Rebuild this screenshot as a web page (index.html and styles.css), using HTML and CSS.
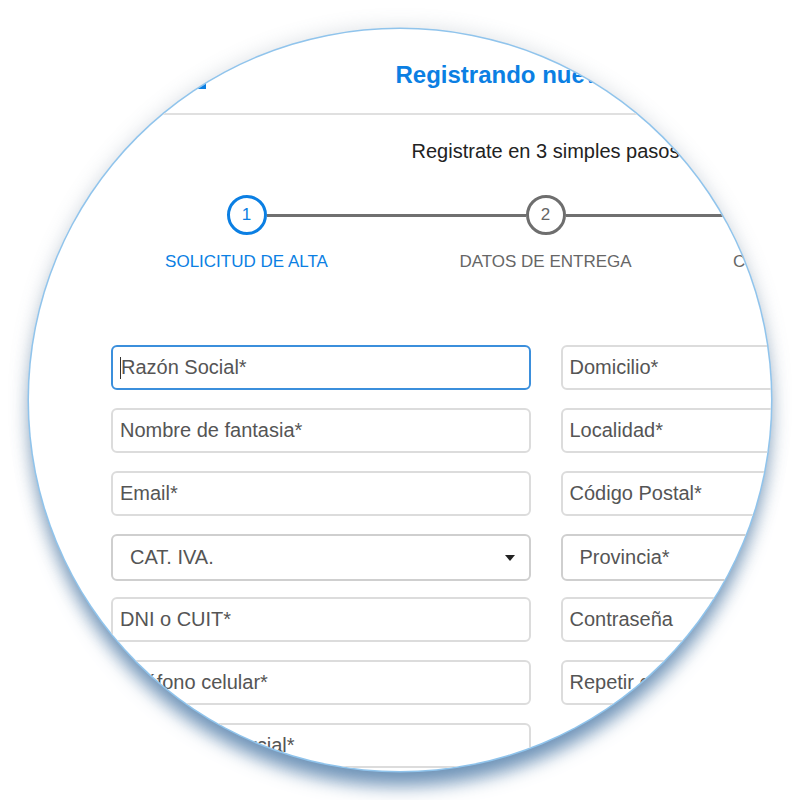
FILE: index.html
```html
<!DOCTYPE html>
<html lang="es">
<head>
<meta charset="utf-8">
<title>Registro</title>
<link rel="stylesheet" href="styles.css">
</head>
<body>
<div class="lens">
  <div class="page">
    <header class="top">
      <svg class="logo" width="90" height="34" viewBox="0 0 90 34" aria-hidden="true"><path d="M0 25 H88 L90 27 V34 H0 Z" fill="#0b7fe3"/></svg>
      <h1 class="title">Registrando nuevo cliente</h1>
      <span></span>
    </header>
    <p class="subtitle">Registrate en 3 simples pasos</p>
    <ol class="steps">
      <li class="step active"><div class="track"><span class="line"></span><span class="dot">1</span><span class="line"></span></div><span class="label">SOLICITUD DE ALTA</span></li>
      <li class="step"><div class="track"><span class="line"></span><span class="dot">2</span><span class="line"></span></div><span class="label">DATOS DE ENTREGA</span></li>
      <li class="step"><div class="track"><span class="line"></span><span class="dot">3</span><span class="line"></span></div><span class="label">CONFIRMACIÓN DE DATOS</span></li>
    </ol>
    <form class="form">
      <div class="field focused"><span class="caret"></span>Razón Social*</div>
      <div class="field">Domicilio*</div>
      <div class="field">Nombre de fantasia*</div>
      <div class="field">Localidad*</div>
      <div class="field">Email*</div>
      <div class="field">Código Postal*</div>
      <div class="field select"><span>CAT. IVA.</span><span class="arrow"></span></div>
      <div class="field select"><span>Provincia*</span><span class="arrow"></span></div>
      <div class="field">DNI o CUIT*</div>
      <div class="field">Contraseña</div>
      <div class="field">Teléfono celular*</div>
      <div class="field">Repetir contraseña</div>
      <div class="field">Teléfono comercial*</div>
    </form>
  </div>
</div>
</body>
</html>
```
FILE: styles.css
```css
* { box-sizing: border-box; }
body {
  margin: 0;
  background: #fff;
  font-family: "Liberation Sans", Arial, sans-serif;
}
.lens {
  position: absolute;
  left: 29px;
  top: 29px;
  width: 742px;
  height: 742px;
  border-radius: 50%;
  overflow: hidden;
  background: #fff;
  box-shadow:
    0 0 0 1.5px #90c4ec,
    0 18px 18px -3px rgba(80, 125, 170, 0.8),
    0 0 20px 2px rgba(90, 110, 130, 0.2);
}
.page {
  width: 897px;
  margin-left: 68px;
  padding-top: 18px;
}
.top {
  display: grid;
  grid-template-columns: 1fr auto 1fr;
  align-items: center;
  height: 68px;
  padding-bottom: 10px;
  border-bottom: 2px solid #e0e0e0;
}
.logo {
  align-self: end;
  margin-left: 19px;
  margin-bottom: 14px;
  display: block;
}
.title {
  margin: 0;
  font-size: 24px;
  line-height: 28px;
  font-weight: 700;
  color: #0b7fe3;
}
.subtitle {
  margin: 24px 0 0;
  text-align: center;
  font-size: 20px;
  line-height: 24px;
  color: #222;
}
.steps {
  list-style: none;
  margin: 32px 0 0;
  padding: 0;
  display: grid;
  grid-template-columns: repeat(3, 1fr);
}
.step {
  display: flex;
  flex-direction: column;
  align-items: center;
}
.track {
  display: flex;
  align-items: center;
  width: 100%;
  height: 40px;
}
.line {
  flex: 1;
  height: 3px;
  background: #707070;
}
.step:first-child .line:first-child,
.step:last-child .line:last-child { visibility: hidden; }
.dot {
  width: 40px;
  height: 40px;
  border-radius: 50%;
  border: 3px solid #6e6e6e;
  display: flex;
  align-items: center;
  justify-content: center;
  font-size: 17px;
  color: #666;
}
.active .dot { border-color: #0b7fe3; color: #0b7fe3; }
.label {
  margin-top: 17px;
  font-size: 17px;
  line-height: 20px;
  color: #666;
  white-space: nowrap;
}
.active .label { color: #0b7fe3; }
.form {
  margin: 73px 0 0;
  padding: 0 14px;
  display: grid;
  grid-template-columns: 1fr 1fr;
  column-gap: 30px;
  row-gap: 18px;
  grid-auto-rows: 45px;
}
.field {
  height: 45px;
  border: 2px solid #dcdcdc;
  border-radius: 6px;
  display: flex;
  align-items: center;
  padding-left: 7px;
  font-size: 20px;
  color: #555;
  white-space: nowrap;
}
.field.focused { border-color: #3b8fdc; }
.caret {
  width: 1px;
  height: 22px;
  background: #333;
}
.field.select {
  height: 47px;
  padding-left: 17px;
  padding-right: 14px;
  justify-content: space-between;
  border-color: #cfcfcf;
}
.arrow {
  width: 0;
  height: 0;
  border-left: 5px solid transparent;
  border-right: 5px solid transparent;
  border-top: 6px solid #222;
}
```
